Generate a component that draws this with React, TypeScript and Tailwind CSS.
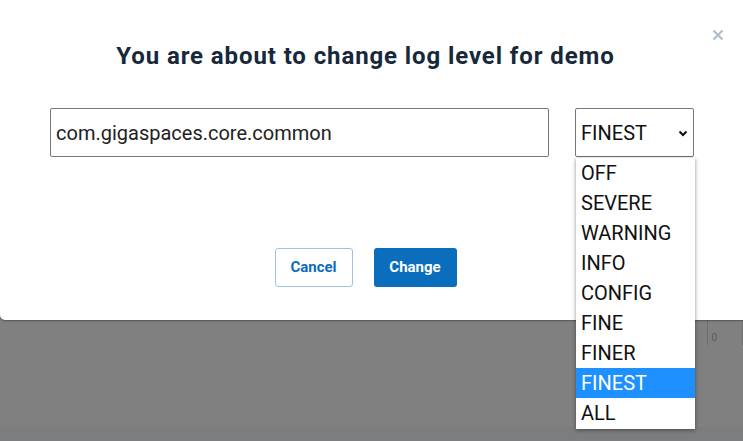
import React from "react";

const levels = ["OFF", "SEVERE", "WARNING", "INFO", "CONFIG", "FINE", "FINER", "FINEST", "ALL"];

export default function App() {
  return (
    <div className="relative flex h-[441px] w-[743px] flex-col overflow-hidden bg-[#808080]" style={{ fontFamily: "Roboto, 'Liberation Sans', sans-serif" }}>
      <div className="relative h-[320px] w-[760px] shrink-0 rounded-bl-[5px] bg-white shadow-[0_1px_2px_rgba(0,0,0,0.35)]">
        <div className="absolute left-[712px] top-[29px] text-[#b3bec6]">
          <svg width="12" height="12" viewBox="0 0 12 12">
            <path d="M1.5 1.5 L10.5 10.5 M10.5 1.5 L1.5 10.5" stroke="currentColor" strokeWidth="2.2" />
          </svg>
        </div>
        <div className="flex w-[731px] flex-col">
          <h1 className="mt-[40px] text-center text-[24px] font-bold leading-[32px] tracking-[0.9px] text-[#17283b]">
            You are about to change log level for demo
          </h1>
          <div className="mt-[36px] flex items-start pl-[50px]">
            <div className="flex h-[49px] w-[499px] items-center rounded-[2px] border border-[#767676] px-[5px] text-[20px] text-[#222]">
              com.gigaspaces.core.common
            </div>
            <div className="ml-[26px] flex h-[49px] w-[119px] items-center justify-between rounded-[2px] border border-[#767676] pl-[5px] pr-[4px] text-[20px] text-[#111]">
              <span>FINEST</span>
              <svg width="12" height="12" viewBox="0 0 12 12">
                <path d="M2.5 4.5 L6 8 L9.5 4.5" fill="none" stroke="#111" strokeWidth="2" />
              </svg>
            </div>
          </div>
          <div className="mt-[91px] flex justify-center gap-[21px]">
            <button className="h-[39px] w-[78px] rounded-[3px] border border-[#9cc3e6] bg-white text-[15px] font-bold text-[#0b6cbd]">
              Cancel
            </button>
            <button className="h-[39px] w-[83px] rounded-[3px] bg-[#0a6ebd] text-[15px] font-bold text-white">
              Change
            </button>
          </div>
        </div>
      </div>
      <div className="flex flex-1 justify-end">
        <div className="mr-[25px] flex h-[25px] items-end border-l border-[#6e6e6e] pl-[3px] text-[10px] leading-[14px] text-[#5a5a5a]">
          0
        </div>
        <div className="h-[25px] w-[1px] bg-[#6e6e6e]" />
      </div>
      <div className="h-[14px] bg-[#7c7d7e]" />
      <div className="absolute left-[576px] top-[158px] w-[119px] bg-white pb-[1px] shadow-[0_1px_4px_rgba(0,0,0,0.45)]">
        {levels.map((l) => (
          <div
            key={l}
            className={`h-[30px] pl-[5px] text-[20px] leading-[30px] ${l === "FINEST" ? "bg-[#1e90ff] text-white" : "text-[#111]"}`}
          >
            {l}
          </div>
        ))}
      </div>
    </div>
  );
}
